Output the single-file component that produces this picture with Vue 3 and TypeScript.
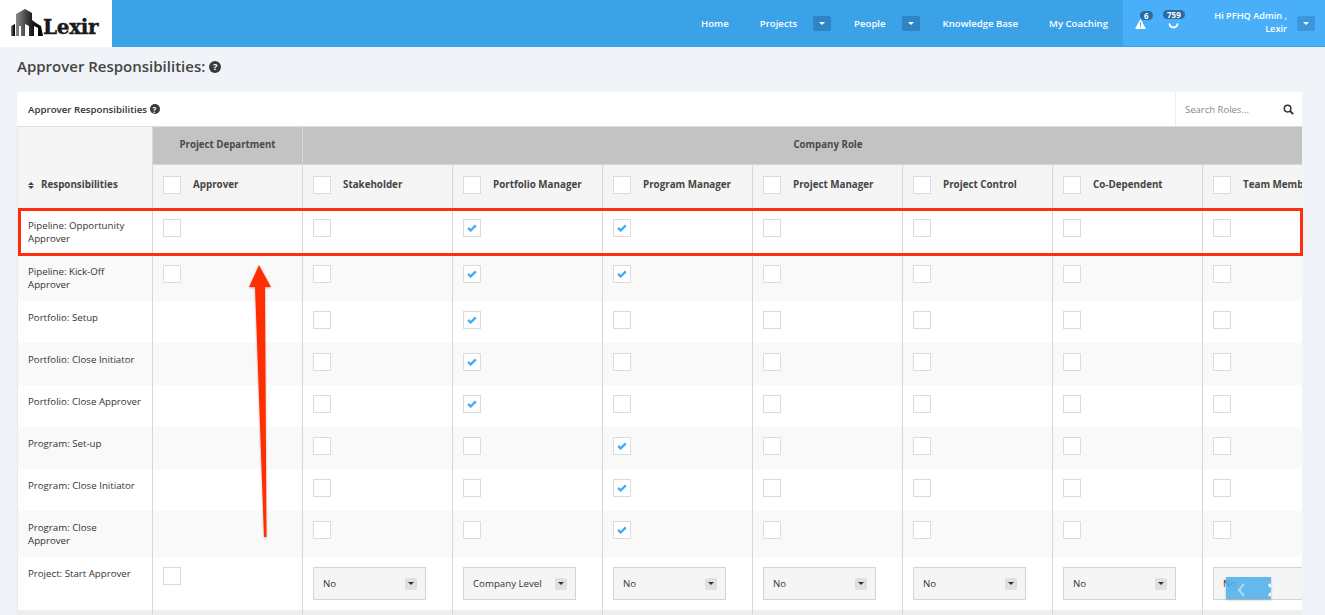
<script setup lang="ts">
type Cell = null | 0 | 1 | string;
interface Row { label: string; cells: Cell[]; h: number }

const columns: string[] = ['Approver', 'Stakeholder', 'Portfolio Manager', 'Program Manager', 'Project Manager', 'Project Control', 'Co-Dependent', 'Team Member'];
const rows: Row[] = [
  { label: 'Pipeline: Opportunity Approver', cells: [0, 0, 1, 1, 0, 0, 0, 0], h: 46 },
  { label: 'Pipeline: Kick-Off Approver', cells: [0, 0, 1, 1, 0, 0, 0, 0], h: 46 },
  { label: 'Portfolio: Setup', cells: [null, 0, 1, 0, 0, 0, 0, 0], h: 42 },
  { label: 'Portfolio: Close Initiator', cells: [null, 0, 1, 0, 0, 0, 0, 0], h: 42 },
  { label: 'Portfolio: Close Approver', cells: [null, 0, 1, 0, 0, 0, 0, 0], h: 42 },
  { label: 'Program: Set-up', cells: [null, 0, 0, 1, 0, 0, 0, 0], h: 42 },
  { label: 'Program: Close Initiator', cells: [null, 0, 0, 1, 0, 0, 0, 0], h: 42 },
  { label: 'Program: Close\nApprover', cells: [null, 0, 0, 1, 0, 0, 0, 0], h: 46 },
  { label: 'Project: Start Approver', cells: [0, 'No', 'Company Level', 'No', 'No', 'No', 'No', 'No'], h: 53 },
  { label: '', cells: [null, null, null, null, null, null, null, null], h: 20 },
];
const gridRows = '38px 44px ' + rows.map((r) => r.h + 'px').join(' ');
</script>

<template>
  <div class="page">
    <header class="nav">
      <div class="logo">
        <svg width="34" height="30" viewBox="0 0 34 30">
          <defs>
            <linearGradient id="bld" x1="0" y1="0" x2="1" y2="0">
              <stop offset="0" stop-color="#8a8a8a" />
              <stop offset="0.6" stop-color="#1c1c1c" />
              <stop offset="1" stop-color="#000" />
            </linearGradient>
          </defs>
          <path d="M1 28 L1 18 L5 16 L5 28 Z" fill="url(#bld)" />
          <path d="M6 28 L6 6 L15 1 L22 5 L22 12 L26 15 L31 18 L33 28 L28 28 L28 20 L24 18 L24 28 L19 28 L19 18 L15 16 L15 28 L11 28 L11 18 L9 18 L9 28 Z" fill="url(#bld)" />
        </svg>
        <span class="logo-text">Lexir</span>
      </div>
      <nav class="menu">
        <a class="item">Home</a>
        <a class="item">Projects</a><span class="drop"><i class="tri"></i></span>
        <a class="item people">People</a><span class="drop"><i class="tri"></i></span>
        <a class="item kb">Knowledge Base</a>
        <a class="item coach">My Coaching</a>
      </nav>
      <div class="user-zone">
        <span class="notif">
          <svg width="11" height="10" viewBox="0 0 11 10"><path d="M5.5 0 L11 10 L0 10 Z" fill="#fff" /><rect x="5" y="3.5" width="1" height="3.5" fill="#3f9fe0" /><rect x="5" y="8" width="1" height="1" fill="#3f9fe0" /></svg>
          <b class="badge b1">6</b>
        </span>
        <span class="notif n2">
          <svg width="11" height="11" viewBox="0 0 11 11"><path d="M1.5 5.5 A4 4 0 1 0 9.5 5.5" fill="none" stroke="#fff" stroke-width="2" /></svg>
          <b class="badge b2">759</b>
        </span>
        <div class="hello">Hi PFHQ Admin ,<br />Lexir</div>
        <span class="drop light"><i class="tri"></i></span>
      </div>
    </header>

    <main class="content">
      <h1 class="title">Approver Responsibilities: <span class="help big">?</span></h1>
      <section class="panel">
        <div class="panel-head">
          <div class="panel-title">Approver Responsibilities <span class="help sm">?</span></div>
          <div class="search">
            <span>Search Roles...</span>
            <svg width="11" height="11" viewBox="0 0 11 11"><circle cx="4.6" cy="4.6" r="3.3" fill="none" stroke="#333" stroke-width="1.5" /><path d="M7 7 L10.2 10.2" stroke="#333" stroke-width="1.8" /></svg>
          </div>
        </div>
        <div class="grid" :style="{ gridTemplateRows: gridRows }">
          <div class="cell resp">
            <span class="sort"><i class="up"></i><i class="down"></i></span>
            Responsibilities
          </div>
          <div class="cell group">Project Department</div>
          <div class="cell group company">Company Role</div>
          <div v-for="c in columns" :key="c" class="cell colhead">
            <span class="box"></span>
            <span class="colname">{{ c }}</span>
          </div>
          <template v-for="(r, i) in rows" :key="i">
            <div class="cell label" :class="{ alt: i % 2 === 1, end: i === 9 }">{{ r.label }}</div>
            <div v-for="(v, j) in r.cells" :key="j" class="cell body" :class="{ alt: i % 2 === 1, end: i === 9 }">
              <span v-if="v === 0 || v === 1" class="box">
                <svg v-if="v === 1" width="10" height="8" viewBox="0 0 12 10"><path d="M1.2 5 L4.4 8 L10.8 1.8" fill="none" stroke="#45aef2" stroke-width="3" /></svg>
              </span>
              <span v-else-if="typeof v === 'string'" class="select">
                <span>{{ v }}</span>
                <span class="sel-btn"><i class="tri dark"></i></span>
              </span>
            </div>
          </template>
        </div>
      </section>
    </main>

    <div class="highlight"></div>
    <svg class="arrow" width="30" height="280" viewBox="0 0 30 280">
      <defs>
        <filter id="sh" x="-30%" y="-5%" width="160%" height="110%"><feDropShadow dx="0" dy="1" stdDeviation="1" flood-color="#000" flood-opacity="0.3" /></filter>
      </defs>
      <path d="M12 3 L24 25 L18 25 L19.5 275 L17 275 L8 25 L2 25 Z" fill="#ff2e00" filter="url(#sh)" />
    </svg>
    <div class="scroller">
      <svg width="45" height="22" viewBox="0 0 45 22"><path d="M18 7 L13 13 L18 19" fill="none" stroke="#a9d8f6" stroke-width="2.4" /><path d="M43 7 L45 10 M43 19 L45 16" fill="none" stroke="#fff" stroke-width="2.4" /></svg>
    </div>
  </div>
</template>

<style scoped>
.page { position: relative; width: 1325px; height: 615px; overflow: hidden; background: #f0f4f8; font-family: "Open Sans", "Liberation Sans", sans-serif; color: #333; }
.nav { display: flex; height: 47px; background: #3ca2e8; color: #fff; }
.logo { width: 112px; background: #fff; display: flex; align-items: flex-end; padding: 0 0 10px 10px; box-sizing: border-box; }
.logo svg { flex: none; margin-bottom: -1px; }
.logo-text { font-family: "DejaVu Serif", serif; font-weight: 700; font-size: 20px; line-height: 20px; color: #1a1a1a; margin-left: -1px; letter-spacing: -0.3px; -webkit-text-stroke: 0.4px #1a1a1a; }
.menu { flex: 1; display: flex; align-items: center; justify-content: flex-end; font-size: 9.6px; font-weight: 600; }
.item { white-space: nowrap; margin-left: 31px; }
.item:first-child { margin-left: 0; }
.item.people { margin-left: 23px; }
.item.kb { margin-left: 23px; }
.item.coach { margin-left: 31px; margin-right: 15px; }
.drop { width: 18px; height: 15px; margin-left: 16px; border-radius: 2px; background: #2f84c4; display: flex; align-items: center; justify-content: center; }
.drop.light { background: #3c97da; margin-left: 10px; }
.tri { display: block; width: 0; height: 0; border-left: 3px solid transparent; border-right: 3px solid transparent; border-top: 3px solid #fff; }
.tri.dark { border-top-color: #333; }
.user-zone { width: 202px; flex: none; display: flex; align-items: center; background: #48aff8; border-bottom: 1px solid #3c9fe6; box-sizing: border-box; padding-right: 10px; }
.notif { position: relative; display: flex; margin-left: 12px; margin-top: 2px; }
.notif.n2 { margin-left: 22px; margin-top: 0; }
.badge { position: absolute; font-size: 8px; line-height: 9px; font-weight: 700; background: #2a6a9e; border-radius: 5px; padding: 0 4px; top: -8px; }
.b1 { left: 5px; }
.b2 { left: -5px; }
.hello { flex: 1; font-size: 9.2px; font-weight: 600; line-height: 13px; text-align: right; margin-top: -3px; white-space: nowrap; }
.content { padding: 10px 22px 0 17px; }
.title { margin: 0 0 16px; font-size: 15px; line-height: 19px; font-weight: 600; color: #444; display: flex; align-items: center; gap: 4px; white-space: nowrap; }
.help { display: inline-flex; align-items: center; justify-content: center; border-radius: 50%; background: #3b3b3b; color: #fff; font-weight: 700; font-family: "Open Sans", sans-serif; }
.help.big { width: 12px; height: 12px; font-size: 9.5px; margin-left: 0; }
.help.sm { width: 10px; height: 10px; font-size: 8px; margin-bottom: 3px; }
.panel { background: #fff; width: 1285px; overflow: hidden; }
.panel-head { height: 35px; display: flex; align-items: center; justify-content: space-between; border-bottom: 1px solid #ddd; box-sizing: border-box; }
.panel-title { font-size: 9.7px; font-weight: 600; padding: 2px 0 0 11px; color: #333; }
.search { width: 127px; height: 34px; box-sizing: border-box; border-left: 1px solid #eee; padding: 0 8px 0 9px; display: flex; align-items: center; justify-content: space-between; font-size: 9.5px; color: #888; }
.grid { display: grid; grid-template-columns: 135px repeat(8, 150px); width: 1285px; border-left: 1px solid #e8e8e8; box-sizing: border-box; }
.cell { border-right: 1px solid #d8d8d8; box-sizing: border-box; min-width: 0; }
.resp { grid-row: 1 / span 2; background: #f5f5f5; font-size: 9.8px; font-weight: 700; color: #444; display: flex; align-items: flex-end; padding: 0 0 17px 10px; gap: 7px; line-height: 14px; }
.sort { display: flex; flex-direction: column; gap: 1px; margin-bottom: 3px; }
.up { display: block; width: 0; border-left: 3px solid transparent; border-right: 3px solid transparent; border-bottom: 3px solid #444; }
.down { display: block; width: 0; border-left: 3px solid transparent; border-right: 3px solid transparent; border-top: 3px solid #444; }
.group { background: #c3c3c3; color: #4a4a4a; font-size: 9.7px; font-weight: 700; display: flex; justify-content: center; padding-top: 11px; line-height: 14px; white-space: nowrap; border-bottom: 1px solid #d8d8d8; }
.company { grid-column: 3 / span 7; border-right: none; }
.colhead { background: #f5f5f5; display: flex; align-items: flex-start; padding: 11px 0 0 10px; white-space: nowrap; overflow: hidden; }
.colname { font-size: 9.8px; font-weight: 700; color: #444; margin-left: 12px; padding-top: 1px; line-height: 16px; }
.box { flex: none; width: 18px; height: 18px; box-sizing: border-box; background: #fff; border: 1px solid #dcdcdc; display: flex; align-items: center; justify-content: center; }
.label { background: #fff; padding: 10px 8px 0 10px; font-size: 9.7px; line-height: 13px; color: #333; white-space: pre-line; }
.body { background: #fff; padding: 10px 0 0 10px; overflow: hidden; }
.alt { background: #f9f9f9; }
.end { background: #eee; }
.select { width: 113px; height: 33px; box-sizing: border-box; background: #f5f5f5; border: 1px solid #d4d4d4; display: flex; align-items: center; justify-content: space-between; padding: 0 8px 0 9px; font-size: 9.7px; color: #333; }
.sel-btn { width: 12px; height: 12px; background: #e0e0e0; border-radius: 2px; display: flex; align-items: center; justify-content: center; }
.highlight { position: absolute; left: 18px; top: 208px; width: 1285px; height: 48px; box-sizing: border-box; border: 3px solid #ff2e0e; pointer-events: none; }
.arrow { position: absolute; left: 247px; top: 262px; pointer-events: none; }
.scroller { position: absolute; left: 1226px; top: 577px; width: 45px; height: 22px; background: rgba(80, 175, 235, 0.88); box-shadow: 0 1px 2px rgba(0, 0, 0, 0.25); display: flex; }
</style>

<style>
html, body { margin: 0; background: #f0f4f8; }
</style>
